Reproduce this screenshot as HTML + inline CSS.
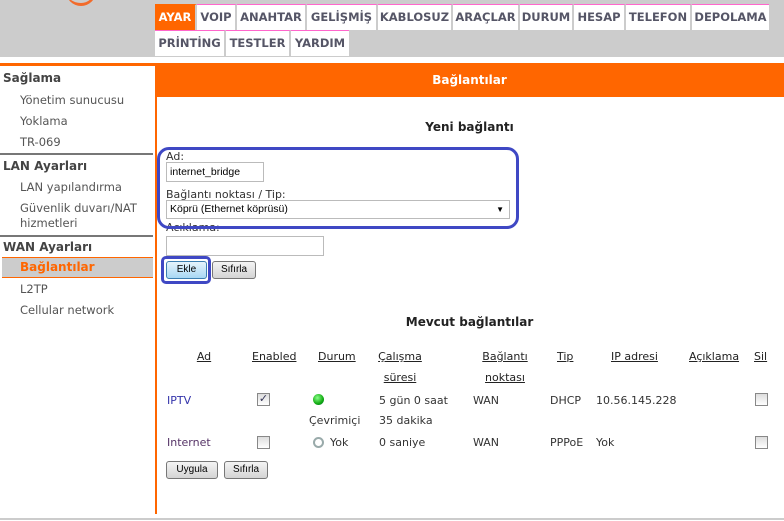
<!DOCTYPE html>
<html><head><meta charset="utf-8"><style>
*{margin:0;padding:0;box-sizing:border-box}
body{width:784px;height:521px;background:#fff;position:relative;overflow:hidden;font-family:"DejaVu Sans","Liberation Sans",sans-serif;font-size:11px;color:#333}
.a{position:absolute;white-space:nowrap}
.top{position:absolute;left:0;top:0;width:784px;height:57px;background:#cccccc}
.tab{position:absolute;height:26px;background:#fff;border-top:1px solid #ff66cc;border-right:2px solid #ccc;font-weight:bold;font-size:11.5px;color:#555566;line-height:25px;text-align:center}
.h{font-weight:bold;font-size:12px;color:#444;left:3px}
.it{left:20px;font-size:11.5px;color:#555}
.line{position:absolute;left:0;width:153px;height:2px;background:#777}
.btn{position:absolute;height:18px;border:1px solid #777;border-radius:3px;background:linear-gradient(#f4f4f4,#d4d4d4);font-family:"Liberation Sans",sans-serif;font-size:10px;color:#000;text-align:center;line-height:16px}
.inp{position:absolute;border:1px solid #bbb;background:#fff;font-family:"Liberation Sans",sans-serif;font-size:10.5px;color:#000;padding-left:3px}
.th{text-decoration:underline;font-size:11px;color:#222;text-align:center}
.cb{position:absolute;width:13px;height:13px;border:1px solid #888;background:linear-gradient(#ddd,#fff)}
</style></head><body>
<div class="top"></div>
<div class="a" style="left:66px;top:-14px;width:30px;height:20px;border-bottom:3px solid #f26b2b;border-right:2px solid #f26b2b;border-radius:0 0 15px 15px"></div>
<div class="tab" style="left:155px;top:4px;width:42px;background:#ff6600;color:#fff;border-top-color:#ff6600">AYAR</div>
<div class="tab" style="left:197px;top:4px;width:40px">VOIP</div>
<div class="tab" style="left:237px;top:4px;width:70px">ANAHTAR</div>
<div class="tab" style="left:307px;top:4px;width:71px">GELİŞMİŞ</div>
<div class="tab" style="left:378px;top:4px;width:75px">KABLOSUZ</div>
<div class="tab" style="left:453px;top:4px;width:67px">ARAÇLAR</div>
<div class="tab" style="left:520px;top:4px;width:54px">DURUM</div>
<div class="tab" style="left:574px;top:4px;width:52px">HESAP</div>
<div class="tab" style="left:626px;top:4px;width:66px">TELEFON</div>
<div class="tab" style="left:692px;top:4px;width:77px;border-right:none">DEPOLAMA</div>
<div class="tab" style="left:155px;top:30px;width:71px">PRİNTİNG</div>
<div class="tab" style="left:226px;top:30px;width:65px">TESTLER</div>
<div class="tab" style="left:291px;top:30px;width:58px;border-right:none">YARDIM</div>

<div class="a" style="left:0;top:63px;width:784px;height:3px;background:#ff6600"></div>
<div class="a" style="left:155px;top:63px;width:629px;height:34px;background:#ff6600;color:#fff;font-weight:bold;font-size:12px;line-height:34px;text-align:center">Bağlantılar</div>
<div class="a" style="left:155px;top:63px;width:2px;height:451px;background:#ff6600"></div>
<div class="a" style="left:0;top:518px;width:784px;height:2px;background:#ccc"></div>

<div class="a h" style="top:71px">Sağlama</div>
<div class="a it" style="top:93px">Yönetim sunucusu</div>
<div class="a it" style="top:114px">Yoklama</div>
<div class="a it" style="top:135px">TR-069</div>
<div class="line" style="top:153px"></div>
<div class="a h" style="top:159px">LAN Ayarları</div>
<div class="a it" style="top:180px">LAN yapılandırma</div>
<div class="a it" style="top:201px">Güvenlik duvarı/NAT</div>
<div class="a it" style="top:216px">hizmetleri</div>
<div class="line" style="top:235px"></div>
<div class="a h" style="top:240px">WAN Ayarları</div>
<div class="a" style="left:2px;top:257px;width:151px;height:21px;background:#ccc;border-top:1px solid #ff6600;border-bottom:1px solid #ff6600"></div>
<div class="a" style="left:20px;top:260px;font-weight:bold;font-size:12px;color:#ff6600">Bağlantılar</div>
<div class="a it" style="top:282px">L2TP</div>
<div class="a it" style="top:303px">Cellular network</div>

<div class="a" style="left:155px;top:120px;width:629px;text-align:center;font-weight:bold;font-size:12px;color:#222">Yeni bağlantı</div>
<div class="a" style="left:166px;top:150px;font-size:11px">Ad:</div>
<div class="inp" style="left:166px;top:162px;width:98px;height:20px;line-height:18px">internet_bridge</div>
<div class="a" style="left:166px;top:188px;font-size:11px">Bağlantı noktası / Tip:</div>
<div class="inp" style="left:166px;top:200px;width:344px;height:19px;line-height:17px">Köprü (Ethernet köprüsü)<span style="position:absolute;right:5px;top:0;font-size:8px">▼</span></div>
<div class="a" style="left:166px;top:223px;font-size:11px;height:8px;overflow:hidden;line-height:2px;padding-top:4px">Açıklama:</div>
<div class="inp" style="left:166px;top:236px;width:158px;height:20px"></div>
<div class="a" style="left:157px;top:147px;width:362px;height:82px;border:3px solid #3f48c4;border-radius:12px"></div>
<div class="btn" style="left:166px;top:261px;width:41px;background:linear-gradient(#e6f4fc,#a8d8f4);border-color:#3c7fb1">Ekle</div>
<div class="btn" style="left:212px;top:261px;width:44px">Sıfırla</div>
<div class="a" style="left:161px;top:256px;width:50px;height:28px;border:3px solid #3f48c4;border-radius:5px"></div>

<div class="a" style="left:155px;top:315px;width:629px;text-align:center;font-weight:bold;font-size:12px;color:#222">Mevcut bağlantılar</div>
<div class="a th" style="left:186px;top:350px;width:36px">Ad</div>
<div class="a th" style="left:252px;top:350px">Enabled</div>
<div class="a th" style="left:318px;top:350px">Durum</div>
<div class="a th" style="left:377px;top:350px;width:46px">Çalışma</div>
<div class="a th" style="left:377px;top:371px;width:46px">süresi</div>
<div class="a th" style="left:480px;top:350px;width:50px">Bağlantı</div>
<div class="a th" style="left:480px;top:371px;width:50px">noktası</div>
<div class="a th" style="left:557px;top:350px">Tip</div>
<div class="a th" style="left:611px;top:350px">IP adresi</div>
<div class="a th" style="left:689px;top:350px">Açıklama</div>
<div class="a th" style="left:754px;top:350px">Sil</div>

<div class="a" style="left:167px;top:394px;color:#3333aa">IPTV</div>
<div class="cb" style="left:257px;top:393px;color:#335;font-size:11px;line-height:10px;text-align:center">✓</div>
<div class="a" style="left:313px;top:394px;width:11px;height:11px;border-radius:50%;background:radial-gradient(circle at 40% 35%,#8f8,#1a1 60%,#063);"></div>
<div class="a" style="left:379px;top:394px">5 gün 0 saat</div>
<div class="a" style="left:473px;top:394px">WAN</div>
<div class="a" style="left:550px;top:394px">DHCP</div>
<div class="a" style="left:596px;top:394px">10.56.145.228</div>
<div class="cb" style="left:755px;top:393px"></div>
<div class="a" style="left:309px;top:414px">Çevrimiçi</div>
<div class="a" style="left:379px;top:414px">35 dakika</div>

<div class="a" style="left:167px;top:436px;color:#553366">Internet</div>
<div class="cb" style="left:257px;top:436px"></div>
<div class="a" style="left:313px;top:437px;width:11px;height:11px;border-radius:50%;border:2px solid #9aa"></div>
<div class="a" style="left:330px;top:436px">Yok</div>
<div class="a" style="left:379px;top:436px">0 saniye</div>
<div class="a" style="left:473px;top:436px">WAN</div>
<div class="a" style="left:550px;top:436px">PPPoE</div>
<div class="a" style="left:596px;top:436px">Yok</div>
<div class="cb" style="left:755px;top:436px"></div>

<div class="btn" style="left:166px;top:461px;width:52px">Uygula</div>
<div class="btn" style="left:224px;top:461px;width:44px">Sıfırla</div>
</body></html>
